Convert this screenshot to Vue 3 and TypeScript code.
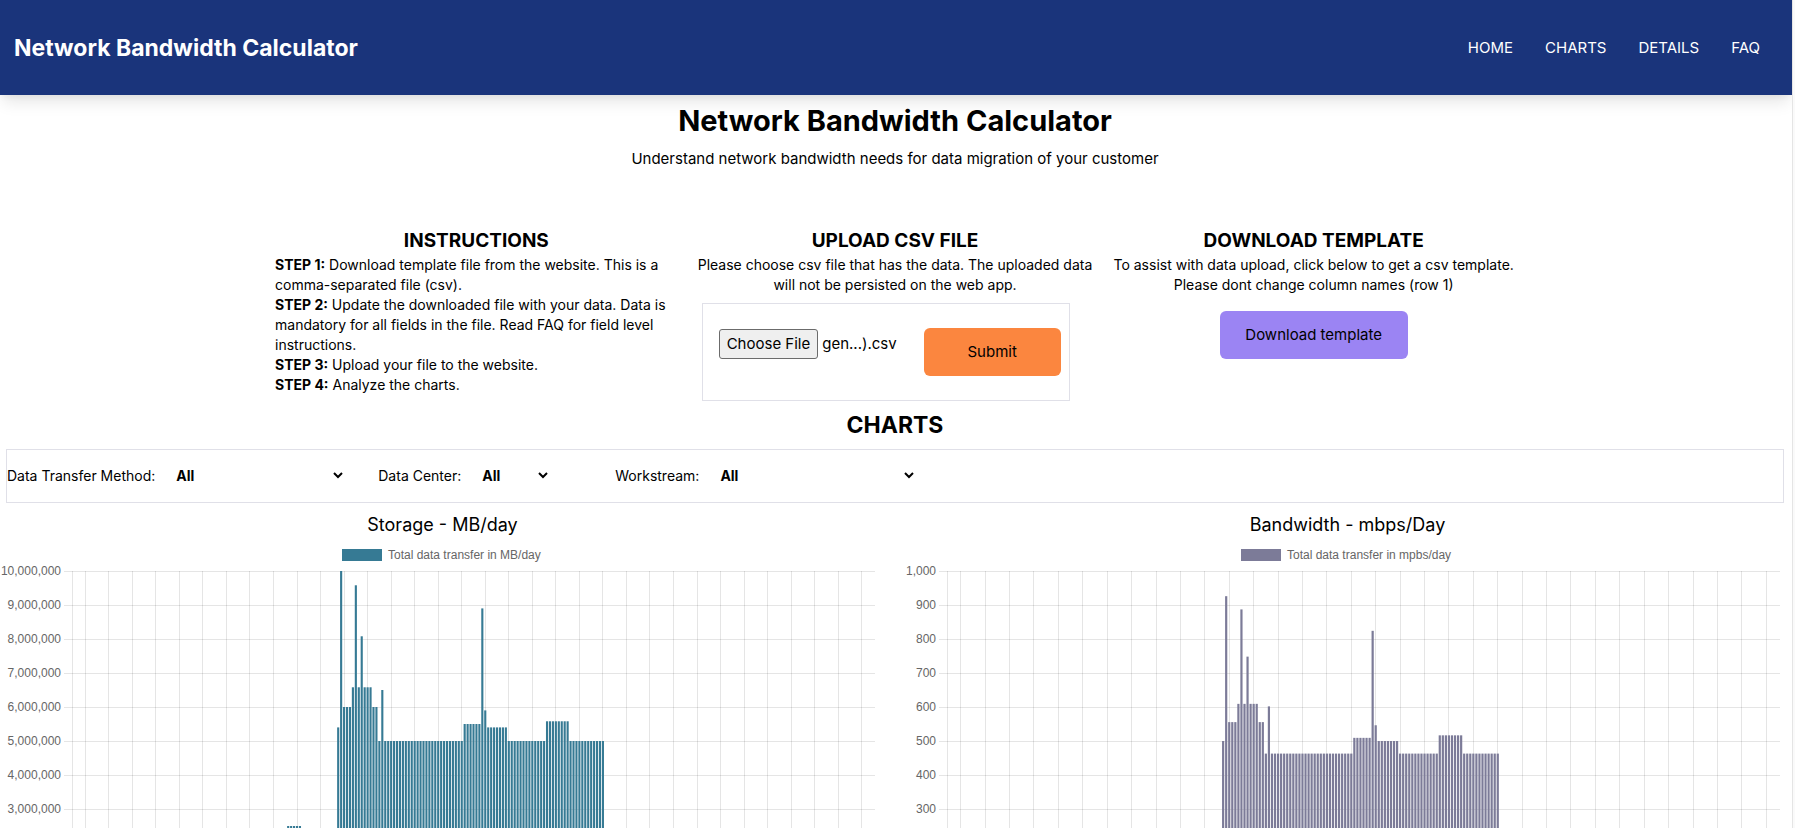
<script setup lang="ts">
import { computed, onBeforeUnmount, onMounted, ref } from 'vue'

interface Filter {
  id: string
  label: string
  size: string
}

interface Chart {
  title: string
  legend: string
  kind: string
  legendWidth: number
  left: number
  max: number
  values: number[]
}

const links = ['Home', 'Charts', 'Details', 'FAQ']

const steps = [
  'Download template file from the website. This is a comma-separated file (csv).',
  'Update the downloaded file with your data. Data is mandatory for all fields in the file. Read FAQ for field level instructions.',
  'Upload your file to the website.',
  'Analyze the charts.',
]

const filters: Filter[] = [
  { id: 'method', label: 'Data Transfer Method:', size: 'medium' },
  { id: 'center', label: 'Data Center:', size: 'small' },
  { id: 'workstream', label: 'Workstream:', size: 'large' },
]

const DAYS = 273
const runs: Array<[count: number, millions: number]> = [
  [73, 0], [5, 2.5], [12, 0],
  [1, 5.4], [1, 10], [3, 6], [1, 6.58], [1, 9.58], [1, 6.58], [1, 8.08], [3, 6.58],
  [2, 6], [1, 5], [1, 6.5], [27, 5], [6, 5.5], [1, 8.9], [1, 5.9], [7, 5.4],
  [13, 5], [8, 5.58], [12, 5],
]
const storage = runs.flatMap(([count, millions]) => Array<number>(count).fill(millions * 1e6))
// MB per day to megabits per second
const bandwidth = storage.map((mb) => (mb * 8) / 86400)

const charts: Chart[] = [
  { title: 'Storage - MB/day', legend: 'Total data transfer in MB/day', kind: 'storage', legendWidth: 201, left: 72, max: 10e6, values: storage },
  { title: 'Bandwidth - mbps/Day', legend: 'Total data transfer in mpbs/day', kind: 'bandwidth', legendWidth: 213, left: 42, max: 1000, values: bandwidth },
]

const PLOT_TOP = 32
const PLOT_HEIGHT = 340
const grid = ref<HTMLElement | null>(null)
const width = ref(885)

let observer: ResizeObserver | undefined
function measure() {
  const card = grid.value?.querySelector('.chart')
  if (card) width.value = card.clientWidth
}
onMounted(() => {
  measure()
  observer = new ResizeObserver(measure)
  if (grid.value) observer.observe(grid.value)
})
onBeforeUnmount(() => observer?.disconnect())

const drawn = computed(() =>
  charts.map((chart) => {
    const right = width.value - 10
    const step = (right - chart.left) / DAYS
    const bottom = PLOT_TOP + PLOT_HEIGHT
    const rows = Array.from({ length: 11 }, (_, i) => ({
      y: PLOT_TOP + i * 34,
      text: (chart.max - (chart.max / 10) * i).toLocaleString('en-US'),
    }))
    const columns = Array.from({ length: 34 }, (_, i) => Math.floor(chart.left + step * (4.5 + i * 8)) + 0.5)
    const bars = chart.values
      .map((value, i) => {
        const height = (value / chart.max) * PLOT_HEIGHT
        return { x: chart.left + step * (i + 0.14), y: bottom - height, w: step * 0.72, h: height }
      })
      .filter((bar) => bar.h > 0)
    const legendX = Math.round((width.value - chart.legendWidth) / 2)
    return { ...chart, right, bottom, rows, columns: [chart.left + 0.5, ...columns], bars, legendX }
  }),
)

const fileName = ref('gen...).csv')
function pick(event: Event) {
  const file = (event.target as HTMLInputElement).files?.[0]
  if (file) fileName.value = file.name
}
</script>

<template>
  <div class="page">
    <header class="nav">
      <span class="brand">Network Bandwidth Calculator</span>
      <nav class="links">
        <a v-for="link in links" :key="link" :href="'#' + link.toLowerCase()">{{ link.toUpperCase() }}</a>
      </nav>
    </header>

    <main class="main">
      <h1>Network Bandwidth Calculator</h1>
      <p class="tagline">Understand network bandwidth needs for data migration of your customer</p>

      <div class="panels">
        <section class="panel">
          <h2>INSTRUCTIONS</h2>
          <p v-for="(step, i) in steps" :key="i" class="step"><b>STEP {{ i + 1 }}:</b> {{ step }}</p>
        </section>

        <section class="panel">
          <h2>UPLOAD CSV FILE</h2>
          <p>Please choose csv file that has the data. The uploaded data will not be persisted on the web app.</p>
          <form class="upload" @submit.prevent>
            <div class="picker">
              <input id="csv" class="file" type="file" accept=".csv" @change="pick" />
              <label for="csv">Choose File</label>
              <span class="name">{{ fileName }}</span>
            </div>
            <button class="button submit" type="submit">Submit</button>
          </form>
        </section>

        <section class="panel">
          <h2>DOWNLOAD TEMPLATE</h2>
          <p>To assist with data upload, click below to get a csv template. Please dont change column names (row 1)</p>
          <button class="button download" type="button">Download template</button>
        </section>
      </div>

      <h2 id="charts" class="heading">CHARTS</h2>

      <div class="filters">
        <div v-for="filter in filters" :key="filter.id" class="filter" :class="filter.size">
          <label :for="filter.id">{{ filter.label }}</label>
          <span class="select">
            <select :id="filter.id">
              <option>All</option>
            </select>
            <svg class="chevron" width="10" height="10" viewBox="0 0 10 10" aria-hidden="true">
              <path d="M1 2 5 6 9 2" />
            </svg>
          </span>
        </div>
      </div>

      <div ref="grid" class="charts">
        <section v-for="chart in drawn" :key="chart.kind" class="chart" :class="chart.kind">
          <h3>{{ chart.title }}</h3>
          <svg class="plot" :width="width" height="400" role="img" :aria-label="chart.legend">
            <rect class="bar" :x="chart.legendX" y="10" width="40" height="12" />
            <text :x="chart.legendX + 46" y="20">{{ chart.legend }}</text>
            <g v-for="row in chart.rows" :key="row.y">
              <line :x1="chart.left - 8" :x2="chart.right" :y1="row.y + 0.5" :y2="row.y + 0.5" />
              <text class="tick" :x="chart.left - 11" :y="row.y + 4">{{ row.text }}</text>
            </g>
            <line v-for="x in chart.columns" :key="x" :x1="x" :x2="x" :y1="PLOT_TOP" :y2="chart.bottom + 8" />
            <rect v-for="bar in chart.bars" :key="bar.x" class="bar" :x="bar.x" :y="bar.y" :width="bar.w" :height="bar.h" />
          </svg>
        </section>
      </div>
    </main>
  </div>
</template>

<style>
html,
body {
  background: #fafafa;
}
</style>

<style scoped>
.page {
  box-sizing: border-box;
  height: 100vh;
  margin-right: 2px;
  overflow-x: hidden;
  overflow-y: auto;
  scrollbar-width: none;
  border-right: 1px solid #e5e5e5;
  background: #fff;
  color: #000;
  font: 15px/24px Inter, "Liberation Sans", sans-serif;
}

h1,
h2,
h3,
p {
  margin: 0;
}

.nav {
  display: flex;
  align-items: center;
  justify-content: space-between;
  height: 95px;
  padding: 0 32px 0 14px;
  background: #1a347b;
  color: #fff;
  box-shadow: 0 10px 15px -3px rgba(0, 0, 0, 0.1), 0 4px 6px -2px rgba(0, 0, 0, 0.05);
}

.brand {
  font-size: 23px;
  font-weight: 700;
}

.links {
  display: flex;
  gap: 32px;
}

.links a {
  color: inherit;
  text-decoration: none;
}

.main {
  margin-right: 2px;
  padding-top: 8px;
}

h1 {
  font-size: 29px;
  line-height: 36px;
  text-align: center;
}

.tagline {
  margin-top: 8px;
  text-align: center;
}

.panels {
  display: grid;
  grid-template-columns: repeat(3, 1fr);
  gap: 16px;
  max-width: 1240px;
  margin: 56px auto 0;
}

.panel {
  font-size: 14px;
  line-height: 20px;
  text-align: center;
}

.panel h2 {
  font-size: 19px;
  line-height: 28px;
}

.step {
  text-align: left;
}

.upload {
  box-sizing: border-box;
  display: flex;
  align-items: flex-start;
  justify-content: space-between;
  width: 368px;
  max-width: 100%;
  height: 98px;
  margin: 8px 0 0 8px;
  padding: 24px 8px 0 16px;
  border: 1px solid #e0e0e8;
  font-size: 15px;
}

.picker {
  position: relative;
  display: flex;
  align-items: center;
  gap: 4px;
  padding-top: 1px;
}

.file {
  position: absolute;
  width: 1px;
  height: 1px;
  opacity: 0;
}

.picker label {
  box-sizing: border-box;
  height: 30px;
  padding: 0 7px;
  border: 1px solid #6b6b6b;
  border-radius: 3px;
  background: #efefef;
  line-height: 28px;
}

.button {
  height: 48px;
  padding: 0 24px;
  border: 0;
  border-radius: 6px;
  color: #000;
  font: 15px/24px Inter, "Liberation Sans", sans-serif;
}

.submit {
  width: 137px;
  background: #fb863f;
}

.download {
  min-width: 188px;
  margin-top: 16px;
  background: #9b84f3;
}

.heading {
  margin-top: 8px;
  font-size: 23px;
  line-height: 32px;
  text-align: center;
}

.filters {
  display: flex;
  align-items: center;
  gap: 32px;
  height: 52px;
  margin: 8px 6px 0;
  border: 1px solid #e0e0e8;
  font-size: 14px;
  line-height: 20px;
}

.filter {
  display: flex;
  align-items: center;
  gap: 17px;
}

.select {
  position: relative;
  display: flex;
  align-items: center;
}

.select select {
  width: 174px;
  margin: 0;
  padding: 0 4px;
  border: 0;
  appearance: none;
  background: transparent;
  color: #000;
  font: 700 14px/20px Inter, "Liberation Sans", sans-serif;
}

.small {
  padding-right: 32px;
}

.small select {
  width: 73px;
}

.large select {
  width: 201px;
}

.chevron {
  position: absolute;
  right: 3px;
  fill: none;
  stroke: #000;
  stroke-width: 2;
  pointer-events: none;
}

.charts {
  display: grid;
  grid-template-columns: repeat(2, minmax(0, 1fr));
  gap: 20px;
  margin-top: 8px;
}

.chart h3 {
  font-size: 18px;
  font-weight: 400;
  line-height: 28px;
  text-align: center;
}

.plot {
  display: block;
}

.plot line {
  stroke: rgba(0, 0, 0, 0.1);
}

.plot text {
  fill: #666;
  font: 12px "Liberation Sans", Arial, sans-serif;
}

.plot .tick {
  text-anchor: end;
}

.storage .bar {
  fill: #367a94;
}

.bandwidth .bar {
  fill: #7c7b98;
}
</style>
